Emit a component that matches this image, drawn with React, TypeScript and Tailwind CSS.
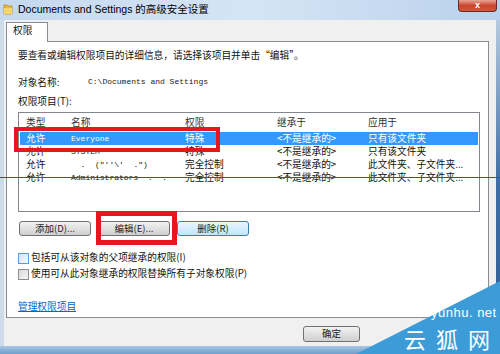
import React from "react";

const cjk = "font-['Noto_Sans_CJK_SC',sans-serif]";
const mono = "font-['Liberation_Mono','Noto_Sans_CJK_SC',monospace]";

function Folder() {
  return (
    <svg width="10" height="12" viewBox="0 0 10 12">
      <path d="M1 2h3l1 1h4v8H1z" fill="#e8b93a" stroke="#b98a1c" strokeWidth="0.8" />
      <path d="M1 5h8v6H1z" fill="#f5d46a" />
    </svg>
  );
}

function Btn({ label, focus }: { label: string; focus?: boolean }) {
  return (
    <div
      className={`w-[72px] h-[15px] flex items-center justify-center rounded-[3px] border text-[9.5px] leading-none text-[#222] ${cjk} ${
        focus
          ? "border-[#3c7fb1] bg-gradient-to-b from-[#eaf6fd] to-[#bee6fd]"
          : "border-[#707070] bg-gradient-to-b from-[#f2f2f2] to-[#cfcfcf]"
      }`}
    >
      {label}
    </div>
  );
}

function Check({ label, hover }: { label: string; hover?: boolean }) {
  return (
    <div className="flex items-center h-[14px] gap-[2px]">
      <div
        className={`w-[11px] h-[11px] border ${
          hover ? "border-[#5b9bd5] bg-gradient-to-br from-[#cde7f8] to-[#f4fbff]" : "border-[#8e8f8f] bg-gradient-to-br from-[#d8d8d8] to-[#f7f7f7]"
        }`}
      />
      <span className={`text-[9.7px] leading-none text-[#111] ${cjk}`}>{label}</span>
    </div>
  );
}

const rows = [
  { t: "允许", n: "Everyone", p: "特殊", i: "<不是继承的>", a: "只有该文件夹", sel: true },
  { t: "允许", n: "SYSTEM", p: "特殊", i: "<不是继承的>", a: "只有该文件夹" },
  { t: "允许", n: "  .  (\"''\\'  .\")", p: "完全控制", i: "<不是继承的>", a: "此文件夹、子文件夹..." },
  { t: "允许", n: "Administrators  .  .", p: "完全控制", i: "<不是继承的>", a: "此文件夹、子文件夹..." },
];

const cols = "grid grid-cols-[45px_114px_92px_91px_1fr] pl-[6px]";

export default function App() {
  return (
    <div className="relative w-[500px] h-[354px] overflow-hidden bg-[#c9dcf0] select-none">
      {/* title bar */}
      <div className="h-[20px] flex items-start justify-between bg-gradient-to-r from-[#c4d8ee] via-[#d6e5f5] to-[#b9d1ec]">
        <div className="flex items-center gap-[5px] pl-[3px] pt-[3px]">
          <Folder />
          <span className="text-[10.5px] leading-none text-black font-['Liberation_Sans','Noto_Sans_CJK_SC',sans-serif]">
            Documents and Settings 的高级安全设置
          </span>
        </div>
        <div className="mr-[3px] w-[39px] h-[12px] rounded-b-[4px] border border-t-0 border-[#6d2a20] bg-gradient-to-b from-[#e8a493] via-[#c9452c] to-[#d2563a] flex items-center justify-center">
          <span className="text-white text-[9px] leading-none font-bold font-['Liberation_Sans',sans-serif]">x</span>
        </div>
      </div>

      {/* middle */}
      <div className="flex h-[326px]">
        <div className="w-[4px] bg-[#cddbea]" />
        <div className="flex-1 bg-[#f0f0f0] flex flex-col">
          <div className="pt-[2px] pl-[2px] flex">
            <div className={`h-[20px] w-[42px] -mb-px relative z-10 bg-white border border-b-0 border-[#898c95] pl-[6px] pt-[3px] text-[9.7px] leading-none text-[#111] ${cjk}`}>
              权限
            </div>
          </div>
          <div className="ml-[2px] w-[483px] h-[277px] bg-white border border-[#898c95] pl-[11px] flex flex-col">
            <div className={`mt-[6px] h-[14px] flex items-center text-[9.7px] text-[#111] ${cjk}`}>
              要查看或编辑权限项目的详细信息，请选择该项目并单击“编辑”。
            </div>
            <div className="mt-[13px] h-[14px] flex items-center">
              <span className={`w-[70px] text-[9.7px] text-[#111] ${cjk}`}>对象名称:</span>
              <span className={`text-[8px] text-[#222] ${mono}`}>C:\Documents and Settings</span>
            </div>
            <div className={`mt-[5px] h-[14px] flex items-center text-[9.7px] text-[#111] ${cjk}`}>权限项目(T):</div>
            <div className="mt-[4px] w-[462px] h-[100px] border border-[#828790] bg-white px-px">
              <div className={`${cols} h-[19px] items-center text-[9.7px] text-[#333] ${cjk}`}>
                <span>类型</span>
                <span>名称</span>
                <span>权限</span>
                <span>继承于</span>
                <span>应用于</span>
              </div>
              {rows.map((r) => (
                <div
                  key={r.n}
                  className={`${cols} h-[13px] items-center text-[9.7px] leading-none ${cjk} ${
                    r.sel ? "bg-[#3399ff] text-white" : "text-[#111]"
                  }`}
                >
                  <span>{r.t}</span>
                  <span className={`text-[8px] whitespace-pre ${mono}`}>{r.n}</span>
                  <span>{r.p}</span>
                  <span>{r.i}</span>
                  <span className="whitespace-nowrap">{r.a}</span>
                </div>
              ))}
            </div>
            <div className="mt-[9px] ml-px flex gap-[7px]">
              <Btn label="添加(D)..." />
              <Btn label="编辑(E)..." />
              <Btn label="删除(R)" focus />
            </div>
            <div className="mt-[15px] flex flex-col gap-[2px]">
              <Check label="包括可从该对象的父项继承的权限(I)" hover />
              <Check label="使用可从此对象继承的权限替换所有子对象权限(P)" />
            </div>
            <div className={`mt-[18px] h-[14px] flex items-center text-[9.7px] text-[#0066cc] underline ${cjk}`}>
              管理权限项目
            </div>
          </div>
          <div className="pt-[8px] pl-[299px]">
            <div className={`w-[57px] h-[16px] flex items-center justify-center rounded-[3px] border border-[#707070] bg-gradient-to-b from-[#f2f2f2] to-[#cfcfcf] text-[9.5px] leading-none text-[#222] ${cjk}`}>
              确定
            </div>
          </div>
        </div>
        <div className="w-[4px] bg-gradient-to-b from-[#b7cbe0] via-[#3d6ea5] to-[#2e5c92]" />
      </div>
      <div className="h-[8px] bg-gradient-to-b from-[#a9c7e6] to-[#6f9cc9]" />

      {/* annotations */}
      <div className="absolute left-[14px] top-[127px] w-[206px] h-[25px] border-[4px] border-[#e5171d]" />
      <div className="absolute left-[96px] top-[211px] w-[81px] h-[34px] border-[5px] border-[#e5171d]" />
      <div className="absolute left-0 top-[177px] w-[500px] h-px bg-[#b3262b]" />

      {/* watermark */}
      <svg className="absolute left-0 top-0" width="500" height="354">
        <polygon points="356,354 500,281 500,354" fill="#3d9cd8" />
      </svg>
      <div className="absolute left-[431px] top-[306px] text-white text-[13px] leading-none tracking-[0.5px] font-['Liberation_Sans',sans-serif]">
        yunhu. net
      </div>
      <div className={`absolute left-[404px] top-[327px] flex gap-[10px] text-white text-[22px] leading-[22px] ${cjk}`}>
        <span>云</span>
        <span>狐</span>
        <span>网</span>
      </div>
    </div>
  );
}
